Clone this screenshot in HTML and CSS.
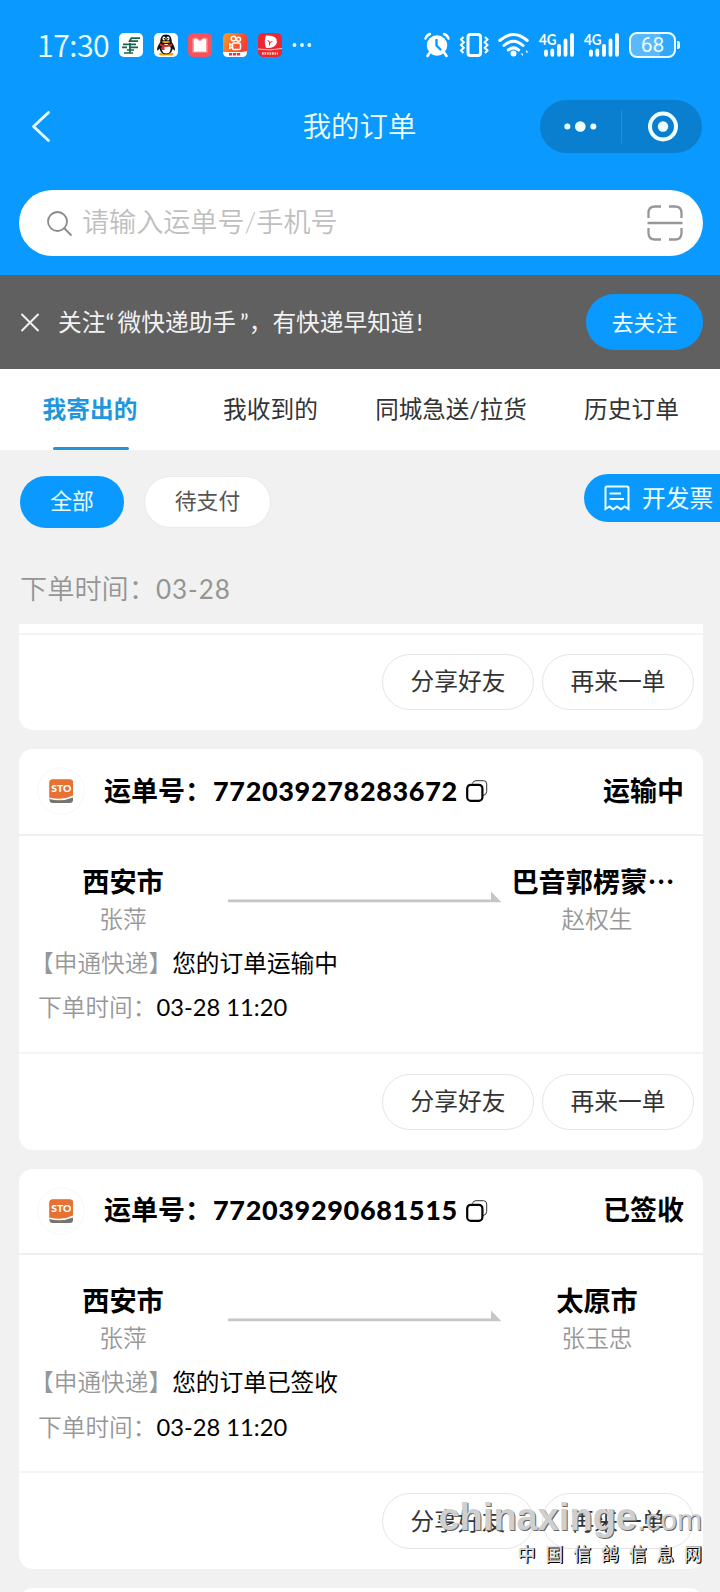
FILE: index.html
```html
<!DOCTYPE html>
<html lang="zh-CN">
<head>
<meta charset="utf-8">
<title>我的订单</title>
<link rel="stylesheet" href="styles.css">
</head>
<body>
<svg class="defs" width="0" height="0">
  <symbol id="copy" viewBox="0 0 22 24">
    <path d="M6.5 4.5Q7 1.7 10 1.7H17.5Q20.7 1.7 20.7 5V12.5Q20.7 16 17 16.5" fill="none" stroke="#333" stroke-width="1"/>
    <rect x="1.2" y="5.8" width="15.2" height="16" rx="3.6" fill="#fff" stroke="#000" stroke-width="2.2"/>
  </symbol>
  <symbol id="arrow" viewBox="0 0 273 12"><path d="M0 8.500H263V.5L273.500 11.200H0Z" fill="#c6c6c6"/></symbol>
</svg>

<div class="screen">
  <header class="top">
    <div class="status">
      <span class="clock">17:30</span>
      <div class="apps">
        <svg width="24" height="24" viewBox="0 0 24 24"><rect width="24" height="24" rx="5" fill="#fff"/><path d="M12 5.200H21M10 8.200H19M4 11.300H17M10 14.300H19M3 14.300H8M8 17H15M5 20H14M12.500 5L10 9M11 10V20" stroke="#17654a" stroke-width="1.700" fill="none"/></svg>
        <svg width="24" height="24" viewBox="0 0 24 24"><rect width="24" height="24" rx="5" fill="#fff"/><ellipse cx="9" cy="21" rx="4" ry="1.600" fill="#f6a500"/><ellipse cx="15.500" cy="21" rx="4" ry="1.600" fill="#f6a500"/><path d="M12 1.500C7.500 1.500 6.300 5 6.300 9C5 11 2.800 14 3 17.500Q4 18 5.500 15.500C6.500 20 9 21.200 12 21.200S18 20 18.800 15.500Q20 18 21 17.500C21.200 14 19 11 17.800 9C17.800 5 16.500 1.500 12 1.500Z" fill="#111"/><ellipse cx="12.200" cy="15.800" rx="4.500" ry="4.800" fill="#fff"/><ellipse cx="10" cy="5.600" rx="1.500" ry="2" fill="#fff"/><ellipse cx="14" cy="5.600" rx="1.500" ry="2" fill="#fff"/><circle cx="10.400" cy="5.800" r=".7"/><circle cx="13.700" cy="5.800" r=".7"/><ellipse cx="12" cy="9" rx="4" ry="1.100" fill="#f6a500"/><path d="M6 10.500Q12 13.500 18 10.500L18.300 12.500Q14 14.500 10.500 14V17H7.500V13L5.700 12.500Z" fill="#d22b2b"/></svg>
        <svg width="24" height="24" viewBox="0 0 24 24"><rect width="24" height="24" rx="5" fill="#f4525c"/><path d="M4.500 5.500L8 4.500L12 7L16 4.500L19.500 5.500V19.500H4.500Z" fill="#fb9a9c"/><path d="M6 6.500L8.500 5.800L12 8.500L15.500 5.800L18 6.500V18.500H6Z" fill="#fff"/></svg>
        <svg width="24" height="24" viewBox="0 0 24 24"><defs><linearGradient id="ks" x2="1" y2=".4"><stop stop-color="#fb9a24"/><stop offset="1" stop-color="#f63c35"/></linearGradient></defs><rect width="24" height="24" rx="5" fill="url(#ks)"/><path d="M0 19H19L24 18V19Q24 24 19 24H5Q0 24 0 19Z" fill="#fff"/><g fill="none" stroke="#fff" stroke-width="1.500"><circle cx="10.500" cy="5.600" r="2.300"/><circle cx="15.500" cy="6.200" r="2"/><rect x="9.500" y="10" width="8" height="6.500" rx="1.600"/><path d="M9.500 12L6.800 11V15.200L9.500 14.200"/></g><path d="M6 21.300H18" stroke="#e0333c" stroke-width="2.600" stroke-dasharray="3.200 .8"/></svg>
        <svg width="24" height="24" viewBox="0 0 24 24"><rect width="24" height="24" rx="5" fill="#ea2732"/><path d="M8 2.500Q20 2 19 9.500Q17 15.500 8 15Q5.500 8 8 2.500Z" fill="#fff"/><path d="M9.500 7.500Q11 7.500 11.800 10Q13 8.500 14.500 8.500M11.500 10V12.500" stroke="#ea2732" stroke-width="1.100" fill="none"/><path d="M0 16Q12 18 24 15.500" stroke="#ffd9cf" stroke-width=".9" fill="none"/><path d="M4 20.500H20" stroke="#ffd0b0" stroke-width="2.600" stroke-dasharray="1.700 .8"/></svg>
        <svg width="20" height="24" viewBox="0 0 20 24" fill="#e8ffff"><circle cx="2.500" cy="12" r="1.900"/><circle cx="10" cy="12" r="1.900"/><circle cx="17.300" cy="12" r="1.900"/></svg>
      </div>
      <div class="sys">
        <svg width="26" height="26" viewBox="0 0 26 26"><circle cx="13" cy="13.500" r="10.200" fill="#fff"/><path d="M1.500 6.500Q2.500 3.200 6 2M20 2Q23.500 3.200 24.500 6.500" stroke="#fff" stroke-width="2.400" fill="none" stroke-linecap="round"/><path d="M5.500 21L3.500 24M20.500 21L22.500 24" stroke="#fff" stroke-width="2.600" stroke-linecap="round"/><path d="M12.500 8V13.500L16.500 17.500" stroke="#0a9aff" stroke-width="2.400" fill="none" stroke-linecap="round"/></svg>
        <svg width="30" height="26" viewBox="0 0 30 26" fill="none" stroke="#fff"><rect x="9" y="2.500" width="12.500" height="21" rx="2.600" stroke-width="3"/><path d="M4.500 5L2 7.500L4.800 10.300L2 13L4.800 15.700L2 18.500L4.500 21M26 5L28.500 7.500L25.700 10.300L28.500 13L25.700 15.700L28.500 18.500L26 21" stroke-width="2"/></svg>
        <svg width="32" height="26" viewBox="0 0 32 26" fill="none" stroke="#fff" stroke-linecap="round"><path d="M1.800 8.500Q15.500-3.500 29.200 8.500M6 13.500Q15.500 5 25 13.500M10.300 18Q15.500 13.800 20.700 18" stroke-width="3"/><circle cx="15.500" cy="21.500" r="3" fill="#fff" stroke="none"/><path d="M25 18V24L22.500 21.500H25ZM28 24V18L30.500 20.500H28Z" fill="#fff" stroke="none"/></svg>
        <svg class="sig" width="36" height="26" viewBox="0 0 36 26"><path d="M7 19.500V22.800M13.300 18.500V22.800M20 14V22.800M26.500 8.500V22.800M33 2.800V22.800" stroke="#fff" stroke-width="3.800" stroke-linecap="round"/><text x="0" y="13.200" textLength="17.500" lengthAdjust="spacingAndGlyphs">4G</text></svg>
        <svg class="sig" width="36" height="26" viewBox="0 0 36 26"><path d="M7 19.500V22.800M13.300 18.500V22.800M20 14V22.800M26.500 8.500V22.800M33 2.800V22.800" stroke="#fff" stroke-width="3.800" stroke-linecap="round"/><text x="0" y="13.200" textLength="17.500" lengthAdjust="spacingAndGlyphs">4G</text></svg>
        <div class="battery">68</div>
      </div>
    </div>
    <div class="nav">
      <svg class="back" width="20" height="34" viewBox="0 0 20 34"><path d="M17.500 2.500L2.500 16.500L17.500 30.500" fill="none" stroke="#edffff" stroke-width="2.800" stroke-linecap="round" stroke-linejoin="round"/></svg>
      <h1>我的订单</h1>
      <div class="capsule">
        <svg width="162" height="53" viewBox="0 0 162 53"><g fill="#edffff"><circle cx="27.300" cy="26.500" r="3"/><circle cx="40.300" cy="26.500" r="5.300"/><circle cx="53.300" cy="26.500" r="3"/><circle cx="123" cy="26.500" r="5.200"/></g><path d="M81.500 10.500V43.500" stroke="#268ed8"/><circle cx="123" cy="26.500" r="13" fill="none" stroke="#edffff" stroke-width="4"/></svg>
      </div>
    </div>
    <div class="search">
      <svg width="28" height="28" viewBox="0 0 28 28" fill="none" stroke="#8a8a8a" stroke-width="1.800"><circle cx="11.500" cy="12.500" r="9.500"/><path d="M18 19L25.500 26.500"/></svg>
      <span>请输入运单号/手机号</span>
      <svg class="scan" width="36" height="36" viewBox="0 0 36 36" fill="none" stroke="#979797" stroke-width="2.300"><path d="M1.500 13V8Q1.500 1.500 8 1.500H14M22 1.500H28Q34.500 1.500 34.500 8V13M1.500 23V28Q1.500 34.500 8 34.500H14M22 34.500H28Q34.500 34.500 34.500 28V23M.5 18H35.500"/></svg>
    </div>
  </header>

  <div class="notice">
    <svg width="20" height="20" viewBox="0 0 20 20"><path d="M1.500 2L18.500 19M18.500 2L1.500 19" stroke="#f0f0f0" stroke-width="2"/></svg>
    <p>关注<i>“</i>微快递助手<i class="close">”</i>，有快递早知道<i class="bang">!</i></p>
    <button class="follow">去关注</button>
  </div>

  <nav class="tabs">
    <a class="tab on">我寄出的</a><a class="tab">我收到的</a><a class="tab wide">同城急送/拉货</a><a class="tab">历史订单</a>
  </nav>

  <div class="filters">
    <span class="pill on">全部</span>
    <span class="pill">待支付</span>
    <div class="invoice">
      <svg width="26" height="26" viewBox="0 0 26 26" fill="none" stroke="#edffff" stroke-width="2"><path d="M1.500 24V3Q1.500 1.500 3 1.500H23Q24.500 1.500 24.500 3V24L20.500 21.500L17 24.300L13 21.500L9 24.300L5.500 21.500L1.500 24Z"/><path d="M5.500 8.500H17M5.500 14H20"/></svg>
      <span>开发票</span>
    </div>
  </div>

  <div class="day">下单时间：<b>03-28</b></div>

  <main class="list">
    <section class="card cut">
      <div class="actions"><button>分享好友</button><button>再来一单</button></div>
    </section>

    <section class="card">
      <div class="head">
        <svg class="logo" width="48" height="48" viewBox="0 0 48 48">
          <circle cx="24" cy="24" r="23.300" fill="#fff" stroke="#f7f7f7"/>
          <rect x="12.500" y="12.500" width="23.500" height="23.500" rx="3.200" fill="#77736f"/>
          <path d="M12.500 31V15.500Q12.500 12.500 15.500 12.500H33Q36 12.500 36 15.500V29.500Q25 35 12.500 31Z" fill="#e87033"/>
          <path d="M12.500 30.500Q25 34 36 28.500V30.500Q25 35 12.500 32Z" fill="#fff"/>
          <text x="14.300" y="25.200" textLength="20" lengthAdjust="spacingAndGlyphs">STO</text>
        </svg>
        <span class="no">运单号：<b>772039278283672</b></span>
        <svg class="copy" width="22" height="24"><use href="#copy"/></svg>
        <span class="state">运输中</span>
      </div>
      <div class="body">
        <div class="route">
          <div class="end"><strong>西安市</strong><span>张萍</span></div>
          <svg class="line" width="273" height="12"><use href="#arrow"/></svg>
          <div class="end"><strong>巴音郭楞蒙<i>…</i></strong><span>赵权生</span></div>
        </div>
        <p class="trace"><em>【申通快递】</em>您的订单运输中</p>
        <p class="time"><em>下单时间：</em>03-28 11:20</p>
      </div>
      <div class="actions"><button>分享好友</button><button>再来一单</button></div>
    </section>

    <section class="card">
      <div class="head">
        <svg class="logo" width="48" height="48" viewBox="0 0 48 48">
          <circle cx="24" cy="24" r="23.300" fill="#fff" stroke="#f7f7f7"/>
          <rect x="12.500" y="12.500" width="23.500" height="23.500" rx="3.200" fill="#77736f"/>
          <path d="M12.500 31V15.500Q12.500 12.500 15.500 12.500H33Q36 12.500 36 15.500V29.500Q25 35 12.500 31Z" fill="#e87033"/>
          <path d="M12.500 30.500Q25 34 36 28.500V30.500Q25 35 12.500 32Z" fill="#fff"/>
          <text x="14.300" y="25.200" textLength="20" lengthAdjust="spacingAndGlyphs">STO</text>
        </svg>
        <span class="no">运单号：<b>772039290681515</b></span>
        <svg class="copy" width="22" height="24"><use href="#copy"/></svg>
        <span class="state">已签收</span>
      </div>
      <div class="body">
        <div class="route">
          <div class="end"><strong>西安市</strong><span>张萍</span></div>
          <svg class="line" width="273" height="12"><use href="#arrow"/></svg>
          <div class="end"><strong>太原市</strong><span>张玉忠</span></div>
        </div>
        <p class="trace"><em>【申通快递】</em>您的订单已签收</p>
        <p class="time"><em>下单时间：</em>03-28 11:20</p>
      </div>
      <div class="actions"><button>分享好友</button><button>再来一单</button></div>
    </section>

    <section class="card next"></section>
  </main>

  <div class="mark">
    <div class="site">chinaxinge<small>.com</small></div>
    <div class="name">中国信鸽信息网</div>
  </div>
</div>
</body>
</html>
```

FILE: styles.css
```css
* { box-sizing: border-box; margin: 0; padding: 0; }
body { background: #f1f1f1; }
.defs { position: absolute; }
svg { display: block; flex: none; }
button { border: 0; background: none; font: inherit; color: inherit; }
em, i { font-style: normal; }

.screen {
  position: relative;
  width: 720px;
  height: 1592px;
  overflow: hidden;
  font-family: Lato, "Noto Sans CJK SC", sans-serif;
  font-size: 23.7px;
  color: #333;
  white-space: nowrap;
}

/* blue header */
.top { height: 275px; background: #0a9aff; padding: 0 17px 0 19px; color: #edffff; }
.status { height: 90px; display: flex; align-items: center; padding: 0 26px 0 18px; }
.clock { width: 82px; padding-bottom: 2px; font: 350 30.300px/40px "Noto Sans CJK SC", sans-serif; letter-spacing: -.5px; }
.apps { display: flex; gap: 10.700px; }
.sys { display: flex; align-items: center; margin-left: auto; }
.sys svg + svg { margin-left: 9px; }
.sys svg.sig + svg.sig { margin-left: 9.500px; }
.sig { overflow: visible; }
.sig text { font: 700 15px Lato, sans-serif; fill: #fff; }
.battery {
  position: relative;
  width: 47px; height: 26px; margin: 0 1px 0 9px;
  border: 2px solid #edffff; border-radius: 8px;
  background: linear-gradient(90deg, #5ab8ff 68%, #2ea8ff 68%);
  font: 400 21px/23px Roboto, sans-serif; text-align: center;
}
.battery::after { content: ""; position: absolute; right: -6px; top: 7px; width: 3px; height: 8px; border-radius: 0 2px 2px 0; background: #edffff; }
.nav { height: 73px; display: grid; grid-template-columns: 1fr auto 1fr; align-items: center; padding-right: 1px; }
.back { margin-left: 12px; }
.nav h1 { font-size: 28.400px; font-weight: 350; line-height: 40px; margin: -1px 1px 0 -1px; }
.capsule { justify-self: end; width: 162px; height: 53px; border-radius: 27px; background: #0a7fd0; }
.search { width: 684px; height: 66px; margin-top: 27px; border-radius: 33px; background: #fff; display: flex; align-items: center; padding: 0 20px 0 27px; color: #bfbfbf; font-size: 27.100px; }
.search span { margin-left: 8px; line-height: 38px; padding-bottom: 2px; font-weight: 350; }
.search .scan { margin: -1px 0 0 auto; }

/* follow banner */
.notice { height: 94px; background: #606060; color: #f2f2f2; display: flex; align-items: center; padding: 0 17px 0 20px; }
.notice p { margin-left: 18px; padding-bottom: 3px; }
.notice i { letter-spacing: 3.500px; }
.notice .close { padding-left: 4px; letter-spacing: 0; }
.notice .bang { padding-left: 2px; }
.follow { margin-left: auto; width: 117px; height: 56px; padding-bottom: 2px; border-radius: 28px; background: #0a9aff; color: #edffff; font-size: 21.800px; }

/* tabs */
.tabs { height: 81px; background: #fff; display: grid; grid-template-columns: repeat(4, 180px); text-align: center; }
.tab { position: relative; line-height: 80px; padding-left: 1px; }
.tab.wide { font-size: 23.500px; padding-left: 2px; }
.tab:last-child { padding-left: 3px; }
.tab.on { color: #1f97dc; font-weight: 700; padding-left: 0; }
.tab.on::after { content: ""; position: absolute; left: 53px; bottom: 0; width: 76px; height: 3px; border-radius: 2px; background: #2494d4; }

/* filters */
.filters { height: 101px; display: flex; padding: 24px 0 0 20px; }
.pill { width: 104px; height: 52px; margin-top: 2px; border-radius: 26px; text-align: center; font-size: 21.800px; line-height: 49px; color: #555; }
.pill.on { background: #0a9aff; color: #edffff; }
.pill:not(.on) { width: 127px; margin-left: 20px; background: #fff; border: 1px solid #e9e9e9; line-height: 47px; }
.invoice { width: 136px; height: 48px; margin-left: auto; border-radius: 24px 0 0 24px; background: #0a9aff; color: #edffff; display: flex; align-items: center; padding-left: 20px; }
.invoice span { margin-left: 12px; padding-bottom: 2px; }

.day { height: 73px; padding-left: 20px; font-size: 27.200px; line-height: 76px; color: #959595; font-weight: 350; }
.day b { font-weight: 400; font-size: 26px; letter-spacing: 1px; }

/* orders */
.list { padding: 0 17px 0 19px; }
.card { height: 400.500px; margin-bottom: 19px; border-radius: 14px; background: #fff; }
.card.cut { height: 106px; padding-top: 8.500px; border-radius: 0 0 14px 14px; }
.card.cut .actions { padding-top: 19px; }
.card.next { margin: 0; }
.head { height: 84.500px; display: flex; align-items: center; padding: 0 19px 0 18px; color: #000; font-size: 27px; font-weight: 700; }
.logo text { font: 900 9.500px Lato, sans-serif; fill: #fff; }
.no { margin-left: 19px; padding-bottom: 4px; }
.no b { letter-spacing: .66px; margin-left: 1px; }
.copy { margin-left: 8px; }
.state { margin-left: auto; padding-bottom: 4px; }
.body { height: 218px; border-top: 2px solid #efefef; padding: 26px 17px 0 19px; color: #000; }
.route { display: flex; }
.end { width: 170px; display: flex; flex-direction: column; align-items: center; }
.end:last-child { margin-left: 1px; }
.end strong { height: 39px; font-size: 27.200px; line-height: 39px; }
.end strong i { font-family: "Noto Sans CJK SC", sans-serif; line-height: 1; padding-right: 8px; }
.end span { line-height: 36px; color: #979797; font-weight: 350; }
.line { margin: 29px 10px 0 20px; }
.trace, .time { line-height: 44.500px; }
.trace { margin-top: 4px; text-indent: -8px; }
.body em { color: #979797; font-weight: 350; }
.actions { height: 97.500px; border-top: 2px solid #f4f4f4; display: flex; justify-content: flex-end; gap: 8px; padding: 20px 9px 0 0; }
.actions button { width: 152px; height: 56px; padding-bottom: 3px; border: 1px solid #e4e4e4; border-radius: 28px; }

/* site watermark */
.mark { position: absolute; right: 18px; top: 1495px; text-align: right; color: #cfcfcf; }
.site { height: 44px; font: 700 38px/44px "Liberation Sans", sans-serif; text-shadow: 1px 1px 0 #666; }
.site small { font-size: 30px; font-weight: 400; }
.name { margin-right: -9.500px; font: 500 18px/28px "Noto Sans CJK SC", sans-serif; letter-spacing: 9.700px; color: #ddd; text-shadow: 1px 1px 0 #000, 1px 0 0 #000; }
```
